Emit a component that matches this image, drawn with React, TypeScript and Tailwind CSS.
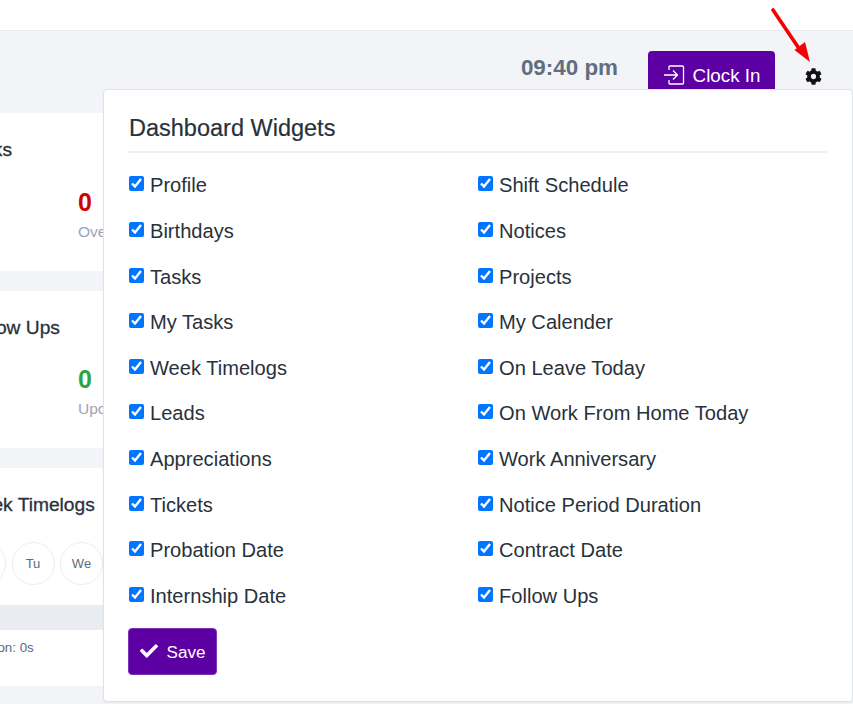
import React from 'react';
import { FaCog, FaCheck } from 'react-icons/fa';

const leftWidgets = ['Profile', 'Birthdays', 'Tasks', 'My Tasks', 'Week Timelogs', 'Leads', 'Appreciations', 'Tickets', 'Probation Date', 'Internship Date'];
const rightWidgets = ['Shift Schedule', 'Notices', 'Projects', 'My Calender', 'On Leave Today', 'On Work From Home Today', 'Work Anniversary', 'Notice Period Duration', 'Contract Date', 'Follow Ups'];

const StatCard = ({ title, titleOffset, pending, label, value, valueColor }: { title: string; titleOffset: string; pending: string; label: string; value: string; valueColor: string }) => (
  <div className="h-[157.5px] w-full overflow-hidden bg-white">
    <h3 className={`mt-[26px] whitespace-nowrap text-[19.2px] leading-[22px] text-[#28313c] [-webkit-text-stroke:0.3px] ${titleOffset}`}>{title}</h3>
    <div className="mt-[26.8px] flex">
      <div className="ml-[-82px] w-[160px] shrink-0">
        <div className="text-[25px] font-bold leading-[29px] text-transparent">0</div>
        <div className="mt-[3px] whitespace-nowrap text-[15.5px] leading-[24px] text-[#99a5b5]">{pending}</div>
      </div>
      <div className="shrink-0">
        <div className={`text-[25px] font-bold leading-[29px] ${valueColor}`}>{value}</div>
        <div className="mt-[3px] whitespace-nowrap text-[15.5px] leading-[24px] text-[#99a5b5]">{label}</div>
      </div>
    </div>
  </div>
);

const WidgetColumn = ({ items }: { items: string[] }) => (
  <div className="flex flex-col">
    {items.map((item) => (
      <label key={item} className="flex h-[45.6px] items-start">
        <input type="checkbox" defaultChecked className="mt-[1px] h-[15px] w-[15px] shrink-0" />
        <span className="ml-[6px] whitespace-nowrap text-[20.1px] leading-[20px] text-[#28313c]">{item}</span>
      </label>
    ))}
  </div>
);

export default function App() {
  return (
    <div className="relative h-[704px] w-[853px] overflow-hidden bg-[#f2f4f7] font-['Liberation_Sans',Arial,sans-serif]">
      <div className="h-[31px] border-b border-[#e8eaef] bg-white" />

      <div className="flex h-[82px] items-start justify-end">
        <div className="mt-[24px] flex flex-col items-end">
          <div className="text-[22.4px] font-bold leading-[26px] text-[#616e80]">09:40 pm</div>
          <div className="mr-[12px] mt-[5px] text-[13px] leading-[16px] text-[#99a5b5]">Friday</div>
        </div>
        <button className="ml-[30px] mt-[20px] flex h-[50px] w-[127px] items-start justify-center gap-[8px] rounded-[4px] bg-[#5c00a3] pt-[14px] text-[18.8px] leading-[22px] text-white">
          <svg width="22" height="20" viewBox="0 0 22 20" fill="none" stroke="currentColor" strokeWidth="1.3" className="shrink-0">
            <path d="M6 1h13.5a1 1 0 0 1 1 1v16a1 1 0 0 1-1 1H6M6 1v4M6 19v-4" />
            <path d="M1 10h13M10 5.5 14.5 10 10 14.5" />
          </svg>
          Clock In
        </button>
        <FaCog className="ml-[30px] mr-[31px] mt-[37px] h-[17px] w-[17px] text-[#111]" />
      </div>

      <div className="flex w-[140px] flex-col">
        <StatCard title="Tasks" titleOffset="ml-[-37px]" pending="Pending" label="Overdue" value="0" valueColor="text-[#d30000]" />
        <div className="h-[20px]" />
        <StatCard title="Follow Ups" titleOffset="ml-[-35px]" pending="Pending" label="Upcoming" value="0" valueColor="text-[#2ca444]" />
        <div className="h-[20px]" />
        <div className="h-[218px] overflow-hidden bg-white">
          <h3 className="ml-[-36px] mt-[26px] whitespace-nowrap text-[19.2px] leading-[22px] text-[#28313c] [-webkit-text-stroke:0.3px]">Week Timelogs</h3>
          <div className="ml-[-37px] mt-[26px] flex gap-[5.5px]">
            {['Mo', 'Tu', 'We'].map((day) => (
              <div key={day} className="flex h-[43px] w-[43px] shrink-0 items-center justify-center rounded-full border border-[#e8eef3] text-[13px] text-[#5b6a7d]">
                {day}
              </div>
            ))}
          </div>
          <div className="mt-[20px] h-[25px] bg-[#e9ecf2]" />
          <div className="ml-[-38px] mt-[10px] whitespace-nowrap text-[13.3px] leading-[16px] text-[#5b6a7d]">Duration: 0s</div>
        </div>
      </div>

      <div className="absolute left-[103px] top-[89px] h-[613px] w-[750px] rounded-[4px] border border-[#dfe2e8] bg-white pl-[24px] shadow-[0_1px_2px_rgba(0,0,0,0.05)]">
        <h2 className="ml-[1px] mt-[24px] text-[23.5px] leading-[28px] text-[#28313c] [-webkit-text-stroke:0.2px]">Dashboard Widgets</h2>
        <div className="mr-[25px] mt-[9px] h-[2px] bg-[#eff1f4]" />
        <div className="ml-[1px] mt-[22.45px] flex">
          <div className="w-[349px]">
            <WidgetColumn items={leftWidgets} />
          </div>
          <WidgetColumn items={rightWidgets} />
        </div>
        <button className="mt-[-3.45px] flex h-[47px] w-[89px] items-center justify-center gap-[9px] rounded-[4px] border border-[#7a33b5] bg-[#5c00a3] pt-[2px] text-[17.1px] text-white">
          <FaCheck className="mt-[-3px] h-[18px] w-[18px]" />
          Save
        </button>
      </div>

      <svg className="absolute left-[765px] top-[5px]" width="50" height="62" viewBox="0 0 50 62" fill="none">
        <path d="M8 5 33 42" stroke="#f50000" strokeWidth="3.6" strokeLinecap="round" />
        <path d="M29.5 45 40 37 45 57Z" fill="#f50000" />
      </svg>
    </div>
  );
}
